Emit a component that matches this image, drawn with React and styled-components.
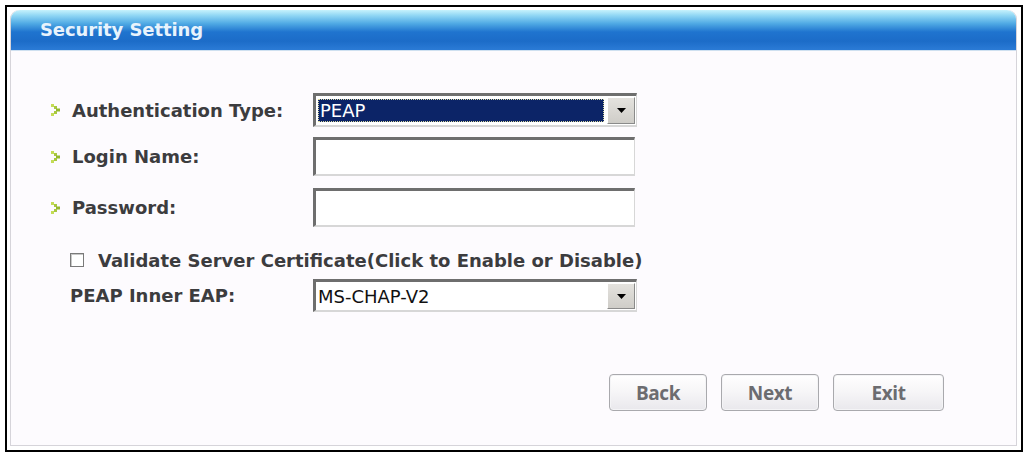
import React from "react";
import styled, { createGlobalStyle } from "styled-components";

const Global = createGlobalStyle`
  html, body { margin: 0; padding: 0; background: #ffffff; }
  * { box-sizing: border-box; }
`;

const Frame = styled.div`
  margin: 5px 0 0 5px;
  width: 1018px;
  height: 447px;
  border: 2px solid #000;
  padding: 3px 4px 4px 3px;
  background: #fff;
`;

const Panel = styled.div`
  height: 100%;
  border: 1px solid #d6d4da;
  border-top: none;
  border-radius: 9px 9px 0 0;
  background: #fdfbfe;
  display: flex;
  flex-direction: column;
`;

const Header = styled.div`
  height: 41px;
  border-radius: 9px 9px 0 0;
  background: linear-gradient(
    to bottom,
    #c6f2fc 0%,
    #8fd6f4 14%,
    #4fa9e4 34%,
    #1f74cf 55%,
    #1c6cc8 78%,
    #2b7bd6 100%
  );
  border-bottom: 1px solid #cfe0f0;
  display: flex;
  align-items: center;
  padding-left: 29px;
  padding-bottom: 2px;
`;

const Title = styled.h1`
  margin: 0;
  font-family: "DejaVu Sans", Verdana, sans-serif;
  font-weight: bold;
  font-size: 18px;
  letter-spacing: -0.1px;
  color: #e8f3fc;
`;

const Body = styled.div`
  flex: 1;
  display: flex;
  flex-direction: column;
  padding: 42px 0 0 40px;
`;

const Row = styled.div`
  display: grid;
  grid-template-columns: ${(p) => p.$labelWidth || 262}px 324px;
  align-items: center;
  height: ${(p) => p.$h}px;
  margin-bottom: ${(p) => p.$mb || 0}px;
  padding-left: ${(p) => p.$indent || 0}px;
`;

const Label = styled.div`
  display: flex;
  align-items: center;
  gap: 12px;
  font-family: "DejaVu Sans", Verdana, sans-serif;
  font-weight: bold;
  font-size: 18px;
  color: #3c3c3e;
`;

const Field = styled.div`
  height: ${(p) => p.$h}px;
  width: ${(p) => p.$w || 322}px;
  background: #fff;
  border-style: solid;
  border-width: 3px 1px 2px 3px;
  border-color: #6e6e6e #d7d7d7 #d7d7d7 #6e6e6e;
  display: flex;
  align-items: stretch;
`;

const Value = styled.div`
  flex: 1;
  margin: ${(p) => (p.$selected ? "3px 3px 3px 2px" : "0")};
  padding-left: 2px;
  display: flex;
  align-items: center;
  font-family: "DejaVu Sans", Tahoma, sans-serif;
  font-size: 18px;
  color: ${(p) => (p.$selected ? "#fff" : "#111")};
  background: ${(p) => (p.$selected ? "#0c2467" : "transparent")};
  outline: ${(p) => (p.$selected ? "1px dotted #d8d8a0" : "none")};
  outline-offset: -1px;
`;

const DropButton = styled.div`
  width: 28px;
  margin: 1px 1px 1px 0;
  background: linear-gradient(to bottom, #e4e2de, #cfcdc8);
  border-style: solid;
  border-width: 1px;
  border-color: #ffffff #8a8a8a #8a8a8a #ffffff;
  display: flex;
  align-items: center;
  justify-content: center;
`;

const Check = styled.span`
  width: 14px;
  height: 14px;
  background: #fff;
  border: 1px solid #7a7a7a;
  box-shadow: inset 1px 1px 0 #c8c8c8;
  flex: none;
`;

const CheckRow = styled.label`
  display: flex;
  align-items: center;
  gap: 14px;
  padding-left: 19px;
  height: 26px;
  margin-bottom: 6px;
  font-family: "DejaVu Sans", Verdana, sans-serif;
  font-weight: bold;
  font-size: 18px;
  color: #3c3c3e;
`;

const Buttons = styled.div`
  display: flex;
  gap: 14px;
  padding-left: 558px;
  margin-top: 62px;
`;

const Button = styled.button`
  width: ${(p) => p.$w}px;
  height: 37px;
  border: 1px solid #a9a9ad;
  border-radius: 4px;
  background: linear-gradient(to bottom, #ffffff 0%, #f6f5f7 50%, #e9e8ec 100%);
  box-shadow: inset 0 0 0 1px #f4f4f6;
  font-family: "Open Sans", "Liberation Sans", sans-serif;
  font-weight: 700;
  font-size: 19px;
  color: #6c6c70;
  letter-spacing: -0.4px;
  padding: 0;
`;

const Arrow = () => (
  <svg width="9" height="12" viewBox="0 0 9 12">
    <rect x="0" y="0" width="3" height="3" fill="#c4dc56" />
    <rect x="3" y="2" width="3" height="3" fill="#a8c840" />
    <rect x="5" y="4.5" width="4" height="3" fill="#94b82e" />
    <rect x="3" y="7" width="3" height="3" fill="#a8c840" />
    <rect x="0" y="9" width="3" height="3" fill="#c4dc56" />
  </svg>
);

const Tri = () => (
  <svg width="9" height="5" viewBox="0 0 9 5">
    <path d="M0 0 H9 L4.5 5 Z" fill="#000" />
  </svg>
);

export default function App() {
  return (
    <>
      <Global />
      <Frame>
        <Panel>
          <Header>
            <Title>Security Setting</Title>
          </Header>
          <Body>
            <Row $h={34} $mb={10}>
              <Label>
                <Arrow />
                Authentication Type:
              </Label>
              <Field $h={34} $w={324}>
                <Value $selected>PEAP</Value>
                <DropButton>
                  <Tri />
                </DropButton>
              </Field>
            </Row>
            <Row $h={39} $mb={12}>
              <Label>
                <Arrow />
                Login Name:
              </Label>
              <Field $h={39} />
            </Row>
            <Row $h={39} $mb={20}>
              <Label>
                <Arrow />
                Password:
              </Label>
              <Field $h={39} />
            </Row>
            <CheckRow>
              <Check />
              Validate Server Certificate(Click to Enable or Disable)
            </CheckRow>
            <Row $h={33} $indent={19} $labelWidth={243}>
              <Label>PEAP Inner EAP:</Label>
              <Field $h={33} $w={324}>
                <Value>MS-CHAP-V2</Value>
                <DropButton>
                  <Tri />
                </DropButton>
              </Field>
            </Row>
            <Buttons>
              <Button $w={98}>Back</Button>
              <Button $w={98}>Next</Button>
              <Button $w={111}>Exit</Button>
            </Buttons>
          </Body>
        </Panel>
      </Frame>
    </>
  );
}
